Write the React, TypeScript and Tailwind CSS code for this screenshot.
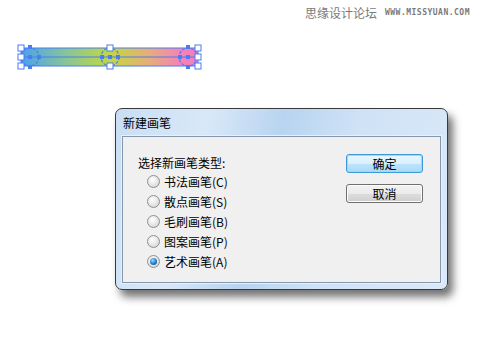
const options = [
  { label: '书法画笔', key: 'C' },
  { label: '散点画笔', key: 'S' },
  { label: '毛刷画笔', key: 'B' },
  { label: '图案画笔', key: 'P' },
  { label: '艺术画笔', key: 'A' },
];

function BrushStroke() {
  const blue = '#4a7cf2';
  const handles: [number, number][] = [
    [7, 6], [7, 15], [7, 24],
    [96, 6], [96, 24],
    [184, 6], [184, 15], [184, 24],
  ];
  const anchors: [number, number][] = [
    [16, 5], [16, 15], [16, 25], [25, 15],
    [88, 15], [96, 15], [104, 15],
    [166, 15], [174, 15], [174, 5], [174, 25],
  ];
  return (
    <svg width="192" height="30" viewBox="0 0 192 30" className="block">
      <defs>
        <linearGradient id="stroke" x1="0" x2="1" y1="0" y2="0">
          <stop offset="0" stopColor="#4aa2ee" />
          <stop offset="0.25" stopColor="#86c49a" />
          <stop offset="0.5" stopColor="#c2d840" />
          <stop offset="0.72" stopColor="#e6ae78" />
          <stop offset="0.9" stopColor="#f384b6" />
          <stop offset="1" stopColor="#f47cc2" />
        </linearGradient>
      </defs>
      <rect x="7" y="6" width="177" height="18" fill="url(#stroke)" stroke={blue} strokeWidth="1" />
      <line x1="7" y1="15" x2="184" y2="15" stroke={blue} strokeWidth="1" />
      {[16, 96, 174].map((cx) => (
        <circle key={cx} cx={cx} cy="15" r="9" fill="none" stroke={blue} strokeWidth="1.2" strokeDasharray="3 1.5" />
      ))}
      {anchors.map(([x, y], i) => (
        <rect key={i} x={x - 2} y={y - 2} width="4" height="4" fill={blue} />
      ))}
      {handles.map(([x, y], i) => (
        <rect key={i} x={x - 3} y={y - 3} width="6" height="6" fill="white" stroke={blue} strokeWidth="1" />
      ))}
    </svg>
  );
}

function Radio({ checked }: { checked: boolean }) {
  return (
    <span className="relative flex h-[13px] w-[13px] items-center justify-center rounded-full border border-[#8e8f8f] bg-[radial-gradient(circle_at_40%_35%,#ffffff,#e2e2e2_60%,#c8c8c8)]">
      {checked && (
        <span className="h-[7px] w-[7px] rounded-full bg-[radial-gradient(circle_at_40%_35%,#9fdcff,#1f7ac4_55%,#0b4f8f)]" />
      )}
    </span>
  );
}

function Button({ children, focused }: { children: string; focused?: boolean }) {
  return (
    <button
      className={
        'flex h-[19px] w-[77px] items-center justify-center rounded-[3px] border text-[12px] leading-none text-black ' +
        (focused
          ? 'border-[#3c9ad8] bg-[linear-gradient(#eaf6fd_0%,#d9f0fc_50%,#bee6fd_51%,#a7d9f5_100%)] shadow-[inset_0_0_0_1px_#9ed8f5]'
          : 'border-[#707070] bg-[linear-gradient(#f2f2f2_0%,#ebebeb_50%,#dddddd_51%,#cfcfcf_100%)] shadow-[inset_0_0_0_1px_#fcfcfc]')
      }
    >
      {children}
    </button>
  );
}

export default function App() {
  return (
    <div
      className="flex h-[339px] w-[480px] flex-col overflow-hidden bg-white"
      style={{ fontFamily: '"Noto Sans CJK SC", "Noto Sans", sans-serif' }}
    >
      <div className="flex h-[25px] items-center justify-end gap-[8px] pr-[10px]">
        <span className="text-[12px] leading-none text-[#7a7a7a]">思缘设计论坛</span>
        <span className="text-[8px] font-semibold leading-none tracking-[0.5px] text-[#7a7a7a]" style={{ fontFamily: '"DejaVu Sans Mono", monospace' }}>
          WWW.MISSYUAN.COM
        </span>
      </div>

      <div className="ml-[14px] mt-[17px]">
        <BrushStroke />
      </div>

      <div className="ml-[115px] mt-[36px] flex h-[182px] w-[333px] flex-col rounded-[7px] border border-[#3a3a3a] bg-[linear-gradient(105deg,#c9def4_0%,#d9e8f8_25%,#b8d4f0_45%,#cfe2f6_65%,#dbe9f9_100%)] px-[6px] pb-[6px] shadow-[5px_7px_9px_rgba(0,0,0,0.55)]">
        <div className="flex h-[27px] items-center pl-[1px] text-[12px] leading-none text-black">新建画笔</div>
        <div className="flex flex-1 border border-[#8797ab] bg-[#f0f0f0] shadow-[0_0_0_1px_#e8f1fb]">
          <div className="flex flex-1 flex-col pl-[15px] pt-[17px]">
            <div className="text-[12px] leading-[18px] text-black">选择新画笔类型:</div>
            <div className="mt-[3px] flex flex-col gap-[7px] pl-[9px]">
              {options.map((o) => (
                <div key={o.key} className="flex h-[13px] items-center gap-[4px]">
                  <Radio checked={o.key === 'A'} />
                  <span className="text-[12px] leading-none text-black">
                    {o.label}({o.key})
                  </span>
                </div>
              ))}
            </div>
          </div>
          <div className="flex flex-col gap-[11px] pr-[17px] pt-[17px]">
            <Button focused>确定</Button>
            <Button>取消</Button>
          </div>
        </div>
      </div>
    </div>
  );
}
